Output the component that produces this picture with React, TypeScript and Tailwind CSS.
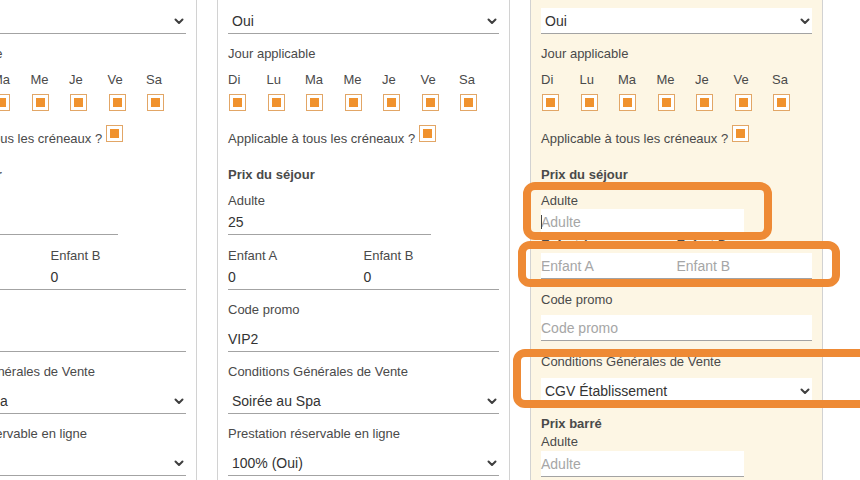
import React from "react";

const days = ["Di", "Lu", "Ma", "Me", "Je", "Ve", "Sa"];

function Chevron() {
  return (
    <svg width="10" height="7" viewBox="0 0 10 7" className="shrink-0">
      <path d="M1.5 1.5 5 5l3.5-3.5" fill="none" stroke="#3f3f3f" strokeWidth="2" strokeLinecap="round" strokeLinejoin="round" />
    </svg>
  );
}

function Select({ value, filled = false, className = "" }: { value: string; filled?: boolean; className?: string }) {
  return (
    <div className={`h-[26px] flex items-center justify-between pl-1 pr-[2px] pt-px border-b border-[#a3a3a3] text-[14px] text-[#333] ${filled ? "bg-white" : ""} ${className}`}>
      <span>{value}</span>
      <Chevron />
    </div>
  );
}

function Input({ value, placeholder, filled = false, cursor = false, className = "" }: { value?: string; placeholder?: string; filled?: boolean; cursor?: boolean; className?: string }) {
  return (
    <div className={`relative h-[26px] flex items-center pt-[2px] border-b border-[#a3a3a3] text-[14px] ${filled ? "bg-white" : ""} ${value ? "text-[#333]" : "text-[#a6a6a6]"} ${className}`}>
      {cursor && <span className="absolute left-0 top-[6px] w-px h-[14px] bg-[#444]" />}
      {value || placeholder}
    </div>
  );
}

function Label({ children, className = "" }: { children: React.ReactNode; className?: string }) {
  return <div className={`pt-[2px] leading-[16px] ${className}`}>{children}</div>;
}

function Box() {
  return (
    <span className="w-[17px] h-[17px] shrink-0 border border-[#e2a666] bg-white flex items-center justify-center">
      <span className="w-[9px] h-[9px] bg-[#f0922e]" />
    </span>
  );
}

function Schedule() {
  return (
    <>
      <div className="mt-[9px] pt-[2px] leading-[18px]">Jour applicable</div>
      <div className="mt-[6px] flex">
        {days.map((d) => (
          <div key={d} className="w-[38.5px] shrink-0">
            <div className="pt-[2px] leading-[18px]">{d}</div>
            <div className="mt-[5px] ml-px">
              <Box />
            </div>
          </div>
        ))}
      </div>
      <div className="mt-[17px] flex items-start">
        <span className="pt-[2px] leading-[18px]">Applicable à tous les créneaux ?</span>
        <span className="ml-[4px] -mt-[3px]">
          <Box />
        </span>
      </div>
      <div className="mt-[16px] pt-[2px] leading-[18px] font-bold">Prix du séjour</div>
      <Label className="mt-[7px]">Adulte</Label>
    </>
  );
}

function SavedColumn() {
  return (
    <div className="w-[293px] shrink-0 border-x border-[#d2d2d2] px-[10px] pt-[8px]">
      <Select value="Oui" />
      <Schedule />
      <Input value="25" className="w-3/4" />
      <div className="mt-[11px] flex">
        <div className="flex-1">
          <Label>Enfant A</Label>
          <Input value="0" />
        </div>
        <div className="flex-1">
          <Label>Enfant B</Label>
          <Input value="0" />
        </div>
      </div>
      <Label className="mt-[10px]">Code promo</Label>
      <Input value="VIP2" className="mt-[8px]" />
      <Label className="mt-[10px]">Conditions Générales de Vente</Label>
      <Select value="Soirée au Spa" className="mt-[8px]" />
      <Label className="mt-[10px]">Prestation réservable en ligne</Label>
      <Select value="100% (Oui)" className="mt-[8px]" />
    </div>
  );
}

function NewColumn() {
  return (
    <div className="w-[293px] shrink-0 border-x border-[#d2d2d2] bg-[#fdf6e4] px-[10px] pt-[8px]">
      <Select value="Oui" filled />
      <Schedule />
      <Input placeholder="Adulte" filled cursor className="w-3/4" />
      <div className="flex">
        <div className="flex-1">
          <Label>Enfant A</Label>
          <Input placeholder="Enfant A" filled />
        </div>
        <div className="flex-1">
          <Label>Enfant B</Label>
          <Input placeholder="Enfant B" filled />
        </div>
      </div>
      <Label className="mt-[11px]">Code promo</Label>
      <Input placeholder="Code promo" filled className="mt-[7px]" />
      <Label className="mt-[11px]">Conditions Générales de Vente</Label>
      <Select value="CGV Établissement" filled className="mt-[8px]" />
      <Label className="mt-[10px] font-bold">Prix barré</Label>
      <Label>Adulte</Label>
      <Input placeholder="Adulte" filled className="mt-px w-3/4" />
    </div>
  );
}

export default function App() {
  return (
    <div className="relative w-[860px] h-[480px] overflow-hidden bg-white font-['Liberation_Sans',Arial,sans-serif] text-[13px] text-[#4a4a4a]">
      <div className="flex gap-[20px] -ml-[96px] h-full">
        <SavedColumn />
        <SavedColumn />
        <NewColumn />
      </div>

      {/* annotation frames */}
      <div className="absolute left-[523px] top-[182px] w-[249px] h-[58px] border-[8px] border-[#ee8a35] rounded-[12px]" />
      <div className="absolute left-[518px] top-[241px] w-[322px] h-[46px] border-[8px] border-[#ee8a35] rounded-[12px]" />
      <div className="absolute left-[513px] top-[349px] w-[400px] h-[59px] border-[8px] border-[#ee8a35] rounded-[12px]" />
    </div>
  );
}
